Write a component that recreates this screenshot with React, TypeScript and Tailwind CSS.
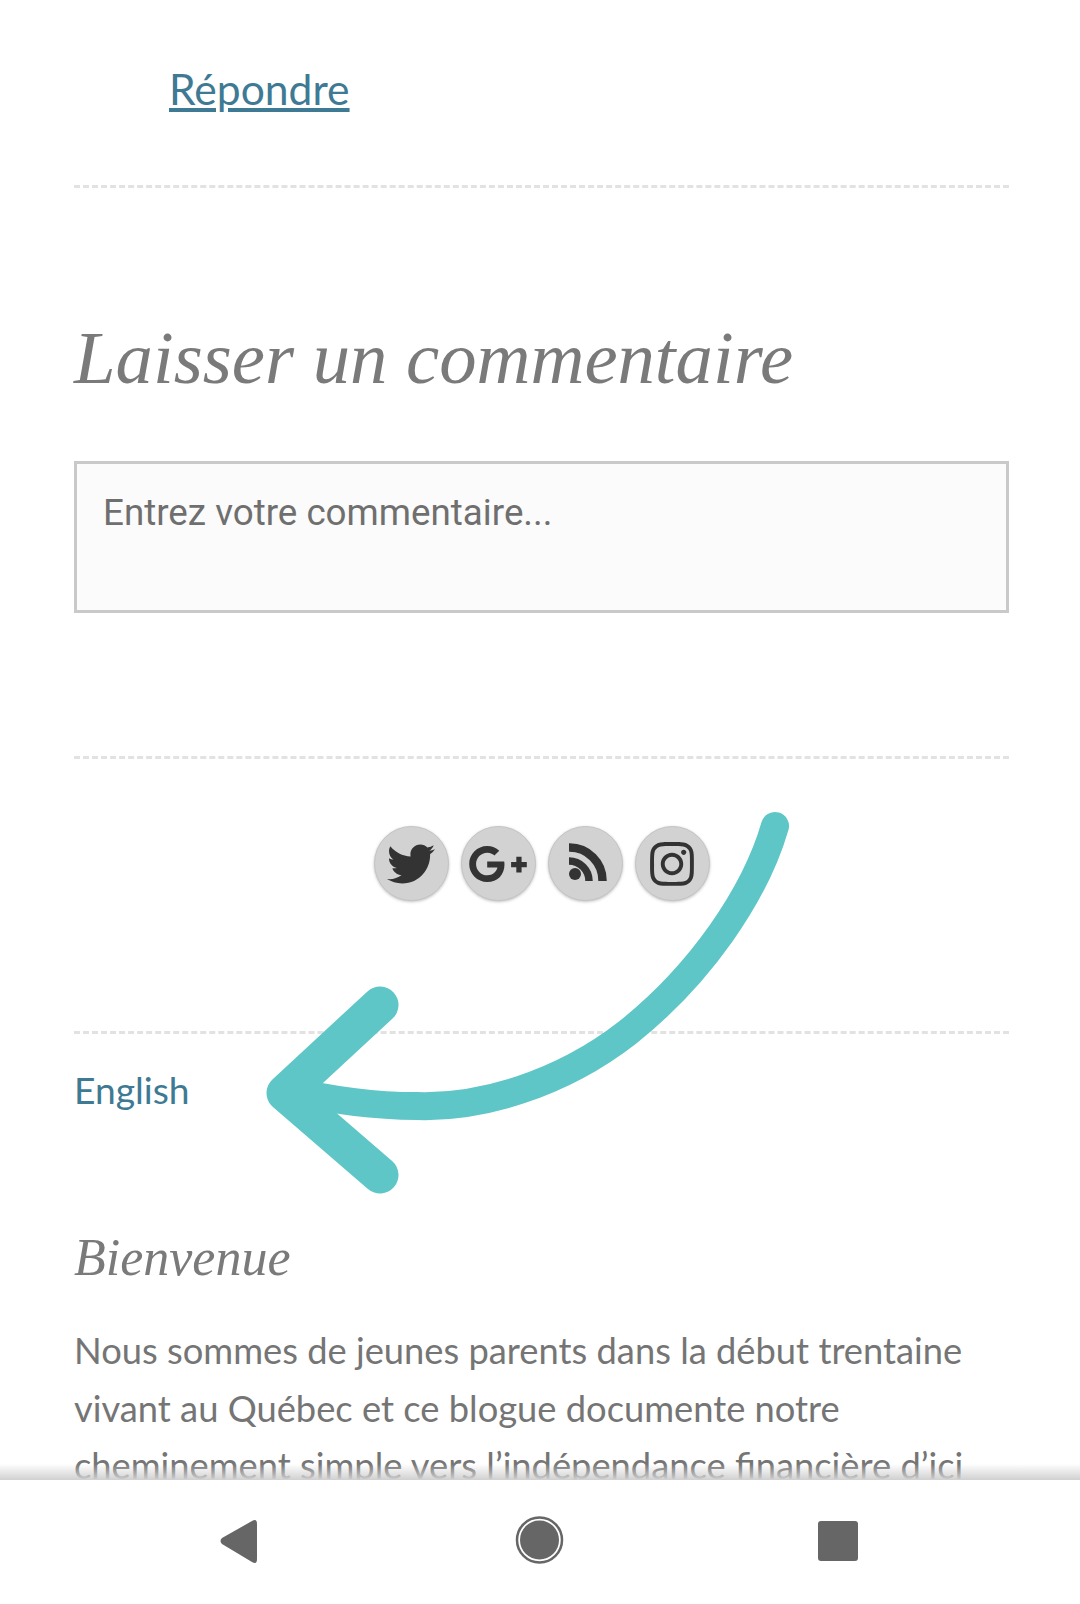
import { FaTwitter, FaGooglePlusG, FaInstagram } from 'react-icons/fa';

const RssIcon = () => (
  <svg className="ml-[6px] -mt-[3px]" width="38" height="38" viewBox="0 0 38 38" fill="none" stroke="currentColor">
    <circle cx="6" cy="31" r="6" fill="currentColor" stroke="none" />
    <path d="M0 18 A20 20 0 0 1 20 38" strokeWidth="7.5" />
    <path d="M0 4.5 A33 33 0 0 1 33.5 38" strokeWidth="8.5" />
  </svg>
);

const socialIcons = [
  { name: 'twitter', icon: <FaTwitter className="text-[48px]" /> },
  { name: 'google', icon: <FaGooglePlusG className="text-[60px]" /> },
  { name: 'rss', icon: <RssIcon /> },
  { name: 'instagram', icon: <FaInstagram className="text-[50px]" /> },
];

const Divider = ({ className }: { className?: string }) => (
  <div className={`border-t-[3px] border-dashed border-[#e2e2e2] ${className}`} />
);

export default function App() {
  return (
    <div className="relative w-[1080px] h-[1604px] bg-white overflow-hidden flex flex-col font-['Lato',sans-serif]">
      {/* page content, cut off by the nav bar */}
      <main className="relative flex-1 overflow-hidden pl-[74px] pr-[71px]">
        <a className="block mt-[64px] ml-[95px] text-[42.6px] leading-[50px] text-[#3f7a94] underline">Répondre</a>
        <Divider className="mt-[71px]" />

        <h2 className="mt-[125px] text-[74.7px] leading-[90px] italic text-[#7a7a7a] font-['Liberation_Serif',serif]">
          Laisser un commentaire
        </h2>

        <div className="mt-[58px] h-[152px] border-[3px] border-[#c9c9c9] bg-[#fbfbfb] pl-[26px] pt-[27px] text-[36.75px] leading-[44px] text-[#6f6f6f] font-['Roboto',sans-serif]">
          Entrez votre commentaire...
        </div>

        <Divider className="mt-[143px]" />

        <div className="mt-[67px] flex justify-center gap-[12px]">
          {socialIcons.map(({ name, icon }) => (
            <div
              key={name}
              className="w-[75px] h-[75px] rounded-full bg-[#d2d2d2] border border-[#c4c4c4] shadow-[0_1px_3px_rgba(0,0,0,0.25)] flex items-center justify-center text-[#333333]"
            >
              {icon}
            </div>
          ))}
        </div>

        <Divider className="mt-[130px]" />

        <a className="block mt-[33px] text-[37.2px] leading-[46px] text-[#3f7a94]">English</a>

        <h3 className="mt-[115px] text-[52px] leading-[60px] italic text-[#7a7a7a] font-['Liberation_Serif',serif]">
          Bienvenue
        </h3>

        <p className="mt-[34px] text-[36.3px] leading-[57.5px] text-[#757575]">
          Nous sommes de jeunes parents dans la début trentaine vivant au Québec et ce blogue documente notre
          cheminement simple vers l’indépendance financière d’ici
        </p>

        <div className="absolute left-0 right-0 bottom-0 h-[16px] bg-gradient-to-b from-transparent to-[#d0d0d0]" />
      </main>

      {/* android nav bar */}
      <nav className="relative h-[124px] bg-white">
        <svg className="absolute left-0 top-0" width="1080" height="124" viewBox="0 0 1080 124" fill="#666666">
          <path d="M252 41 Q257 38 257 44 L257 79 Q257 85 252 82 L222 64 Q219 61 222 58 Z" />
          <circle cx="539.5" cy="60" r="19.5" />
          <circle cx="539.5" cy="60" r="22.5" fill="none" stroke="#666666" strokeWidth="2.5" />
          <rect x="818" y="41" width="40" height="40" rx="3" />
        </svg>
      </nav>

      {/* hand drawn arrow on top of the page */}
      <svg className="absolute left-0 top-0 pointer-events-none" width="1080" height="1604" viewBox="0 0 1080 1604" fill="none" stroke="#5ec6c6" strokeLinecap="round" strokeLinejoin="round">
        <path d="M775 826 C755 895 700 975 627 1033 C560 1085 480 1108 417 1106 C370 1106 330 1100 288 1090" strokeWidth="28" />
        <path d="M380 1005 L285 1093 L380 1175" strokeWidth="37" />
      </svg>
    </div>
  );
}
